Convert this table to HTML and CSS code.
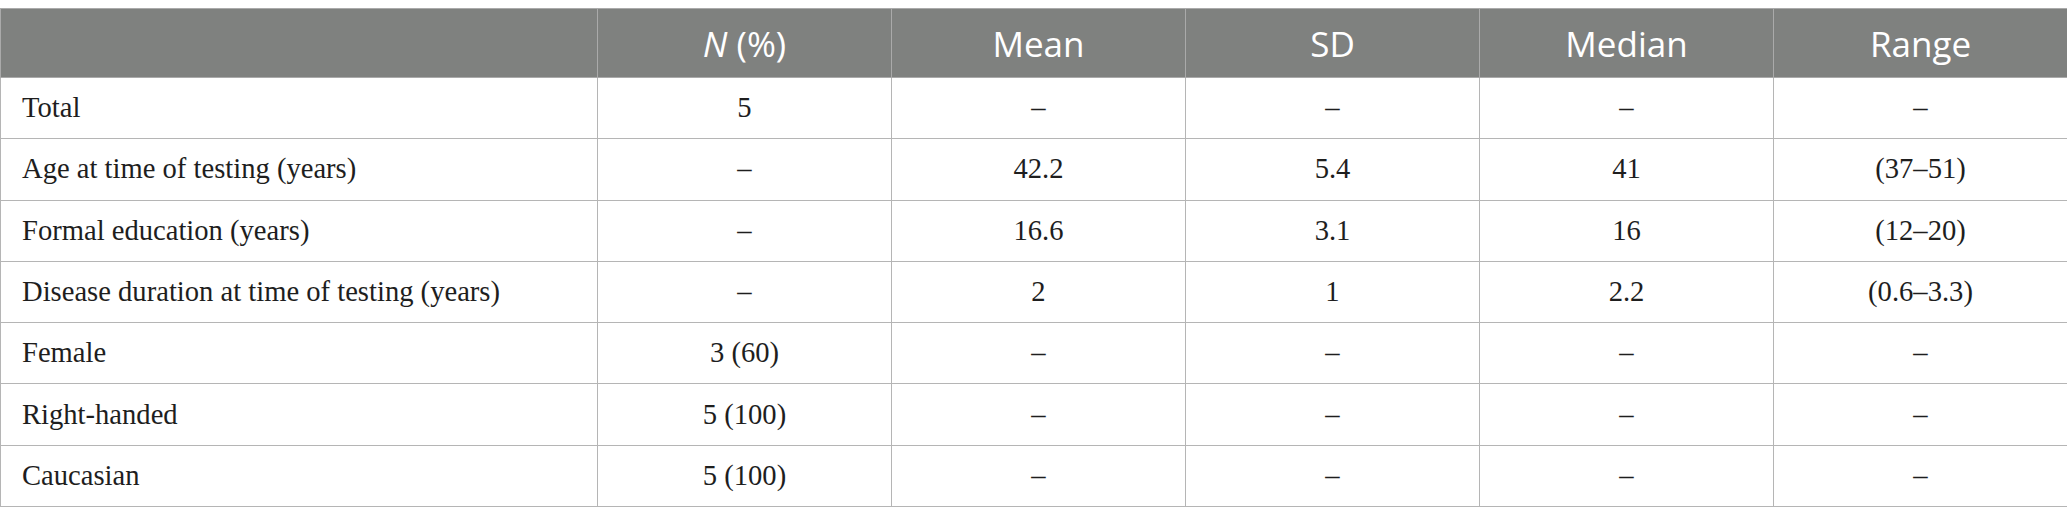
FILE: index.html
```html
<!DOCTYPE html>
<html>
<head>
<meta charset="utf-8">
<link rel="stylesheet" href="styles.css">
</head>
<body>
<table class="data">
  <colgroup>
    <col class="c-label">
    <col class="c-val"><col class="c-val"><col class="c-val"><col class="c-val"><col class="c-val">
  </colgroup>
  <thead>
    <tr><th></th><th><i>N</i> (%)</th><th>Mean</th><th>SD</th><th>Median</th><th>Range</th></tr>
  </thead>
  <tbody>
    <tr><td class="label">Total</td><td>5</td><td>–</td><td>–</td><td>–</td><td>–</td></tr>
    <tr><td class="label">Age at time of testing (years)</td><td>–</td><td>42.2</td><td>5.4</td><td>41</td><td>(37–51)</td></tr>
    <tr><td class="label">Formal education (years)</td><td>–</td><td>16.6</td><td>3.1</td><td>16</td><td>(12–20)</td></tr>
    <tr><td class="label">Disease duration at time of testing (years)</td><td>–</td><td>2</td><td>1</td><td>2.2</td><td>(0.6–3.3)</td></tr>
    <tr><td class="label">Female</td><td>3 (60)</td><td>–</td><td>–</td><td>–</td><td>–</td></tr>
    <tr><td class="label">Right-handed</td><td>5 (100)</td><td>–</td><td>–</td><td>–</td><td>–</td></tr>
    <tr><td class="label">Caucasian</td><td>5 (100)</td><td>–</td><td>–</td><td>–</td><td>–</td></tr>
  </tbody>
</table>
</body>
</html>
```
FILE: styles.css
```css
html, body {
  background: #ffffff;
}
body {
  margin: 8px 0 0 0;
}
.data {
  width: 2067px;
  border-collapse: collapse;
  table-layout: fixed;
}
.c-label { width: 597px; }
.c-val { width: 294px; }
.data th {
  background: #7f817f;
  color: #ffffff;
  font-family: "Open Sans", sans-serif;
  font-weight: 400;
  font-size: 35px;
  height: 68px;
  padding: 0;
  text-align: center;
  vertical-align: middle;
  border: 1px solid #aaaaaa;
}
.data th i {
  font-style: italic;
}
.data td {
  font-family: "Liberation Serif", serif;
  font-size: 28.6px;
  color: #1e1e1e;
  height: 60.3px;
  padding: 0;
  text-align: center;
  vertical-align: middle;
  border: 1px solid #b5b5b5;
}
.data td.label {
  text-align: left;
  padding-left: 21px;
}
```
